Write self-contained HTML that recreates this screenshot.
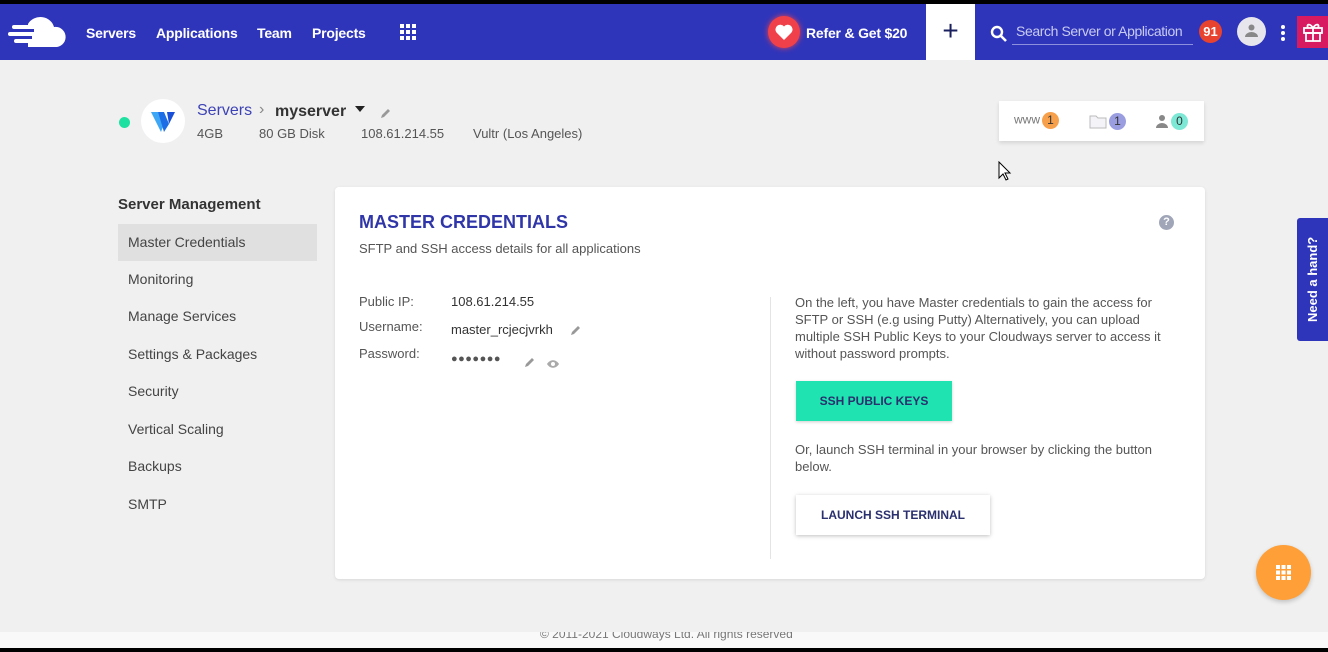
<!DOCTYPE html>
<html><head><meta charset="utf-8"><style>
*{margin:0;padding:0;box-sizing:border-box}
body{width:1328px;height:652px;overflow:hidden;background:#000;font-family:"Liberation Sans",sans-serif;position:relative}
.pg{position:absolute;left:0;top:4px;width:1328px;height:644px;background:#f0f0f0}
.nav{position:absolute;left:0;top:0;width:1328px;height:56px;background:#2f35bb;color:#fff}
.nav .l{position:absolute;top:21px;font-size:14px;font-weight:bold;letter-spacing:-0.2px}
.a{position:absolute}
.side div{position:absolute;left:118px;width:199px;height:37px;line-height:37px;padding-left:10px;font-size:14px;color:#444}
.card{position:absolute;left:335px;top:183px;width:870px;height:392px;background:#fff;border-radius:4px;box-shadow:0 1px 3px rgba(0,0,0,.1)}
.t{font-size:13px;color:#333}
.badge{display:inline-block;width:17px;height:17px;border-radius:50%;text-align:center;font-size:12px;line-height:17px;color:#333;vertical-align:middle}
</style></head><body>
<div class="pg">
<div class="nav">
 <svg class="a" style="left:8px;top:12px" width="60" height="34" viewBox="0 0 60 34"><path d="M20 8a14 13 0 0 1 26 3a10 10 0 0 1 3 20H20z" fill="#fff"/><rect x="4" y="9" width="20" height="4" rx="2" fill="#fff"/><rect x="0" y="16" width="22" height="4" rx="2" fill="#fff"/><rect x="6" y="23" width="16" height="4" rx="2" fill="#fff"/><rect x="16" y="13" width="10" height="3" fill="#2f35bb"/><rect x="14" y="20" width="10" height="3" fill="#2f35bb"/></svg>
 <span class="l" style="left:86px">Servers</span><span class="l" style="left:156px">Applications</span><span class="l" style="left:257px">Team</span><span class="l" style="left:312px">Projects</span>
 <svg class="a" style="left:400px;top:20px" width="16" height="16"><g fill="#fff"><rect x="0" y="0" width="4" height="4"/><rect x="6" y="0" width="4" height="4"/><rect x="12" y="0" width="4" height="4"/><rect x="0" y="6" width="4" height="4"/><rect x="6" y="6" width="4" height="4"/><rect x="12" y="6" width="4" height="4"/><rect x="0" y="12" width="4" height="4"/><rect x="6" y="12" width="4" height="4"/><rect x="12" y="12" width="4" height="4"/></g></svg>
 <div class="a" style="left:768px;top:12px;width:32px;height:32px;border-radius:50%;background:#f0414a;box-shadow:0 0 6px #f0414a"></div>
 <svg class="a" style="left:775px;top:20px" width="18" height="16" viewBox="0 0 18 16"><path d="M9 16L1.5 8.5A4.5 4.5 0 0 1 9 2.5A4.5 4.5 0 0 1 16.5 8.5z" fill="#fff"/></svg>
 <span class="l" style="left:806px">Refer &amp; Get $20</span>
 <div class="a" style="left:926px;top:0;width:49px;height:56px;background:#fff;color:#1a1f5e;font-size:28px;text-align:center;line-height:54px">+</div>
 <svg class="a" style="left:990px;top:21px" width="18" height="18"><circle cx="7" cy="7" r="5" stroke="#fff" stroke-width="2.4" fill="none"/><path d="M11 11l5 5" stroke="#fff" stroke-width="2.6"/></svg>
 <span class="a" style="left:1016px;top:19px;font-size:14px;color:#c8cbf0;letter-spacing:-0.4px">Search Server or Application</span>
 <div class="a" style="left:1012px;top:40px;width:181px;height:1px;background:#8c90dd"></div>
 <div class="a" style="left:1199px;top:16px;width:23px;height:23px;border-radius:50%;background:#e8432f;font-size:13px;font-weight:bold;text-align:center;line-height:23px">91</div>
 <div class="a" style="left:1237px;top:13px;width:29px;height:29px;border-radius:50%;background:#e6e6ec"></div>
 <svg class="a" style="left:1244px;top:19px" width="15" height="15"><circle cx="7.5" cy="4.5" r="3" fill="#888"/><path d="M1 14a6.5 5 0 0 1 13 0z" fill="#888"/></svg>
 <div class="a" style="left:1281px;top:21px;width:4px;height:4px;border-radius:2px;background:#fff;box-shadow:0 6px 0 #fff,0 12px 0 #fff"></div>
 <div class="a" style="left:1297px;top:12px;width:31px;height:32px;background:#d81b60"></div>
 <svg class="a" style="left:1302px;top:17px" width="22" height="22" viewBox="0 0 22 22"><g stroke="#fff" stroke-width="1.8" fill="none"><rect x="2" y="7" width="18" height="5"/><rect x="4" y="12" width="14" height="8"/><path d="M11 7v13M11 7C8 2 4 3 6 7M11 7c3-5 7-4 5 0"/></g></svg>
</div>
<div class="a" style="left:119px;top:113px;width:11px;height:11px;border-radius:50%;background:#1ee0a0"></div>
<div class="a" style="left:141px;top:95px;width:44px;height:44px;border-radius:50%;background:#fff"></div>
<svg class="a" style="left:150px;top:104px" width="28" height="26" viewBox="0 0 28 26"><path d="M1 4h7l6 12-3 8z" fill="#3ea7f5"/><path d="M8 4h6l5 12-5 8z" fill="#1d6ee6"/><path d="M17 4h8l-6 12z" fill="#1a4fd8"/></svg>
<span class="a" style="left:197px;top:98px;font-size:16px;color:#3d42b5">Servers</span>
<span class="a" style="left:259px;top:97px;font-size:16px;color:#888">›</span>
<span class="a" style="left:275px;top:99px;font-size:16px;font-weight:bold;color:#333">myserver</span>
<div class="a" style="left:355px;top:102px;border:5px solid transparent;border-top:6px solid #222"></div>
<svg class="a" style="left:380px;top:103px" width="12" height="12"><path d="M1 11l1-3 6-6 2 2-6 6z" fill="#999"/></svg>
<div class="a t" style="left:197px;top:122px;color:#555">4GB</div>
<div class="a t" style="left:259px;top:122px;color:#555">80 GB Disk</div>
<div class="a t" style="left:361px;top:122px;color:#555">108.61.214.55</div>
<div class="a t" style="left:473px;top:122px;color:#555">Vultr (Los Angeles)</div>
<div class="a" style="left:999px;top:97px;width:205px;height:40px;background:#fff;box-shadow:0 2px 4px rgba(0,0,0,.12)"></div>
<div class="a" style="left:1014px;top:108px;font-size:12px;color:#777">www<span class="badge" style="background:#f7a04b;margin-left:2px">1</span></div>
<svg class="a" style="left:1089px;top:110px" width="18" height="15"><path d="M1 2h6l2 2h8v10H1z" fill="#f4f4f8" stroke="#bbb"/></svg>
<span class="a badge" style="left:1109px;top:109px;background:#9a9ee0">1</span>
<svg class="a" style="left:1155px;top:110px" width="14" height="15"><circle cx="7" cy="4" r="3" fill="#888"/><path d="M1 14a6 5 0 0 1 12 0z" fill="#888"/></svg>
<span class="a badge" style="left:1171px;top:109px;background:#7ee8d6">0</span>
<svg class="a" style="left:998px;top:157px" width="14" height="20"><path d="M1 1v16l4-4 3 6 2-1-3-6h5z" fill="#fff" stroke="#000"/></svg>
<div class="a" style="left:118px;top:192px;font-size:15px;font-weight:bold;color:#333">Server Management</div>
<div class="side">
<div style="top:220px;background:#e0e0e0">Master Credentials</div>
<div style="top:257px">Monitoring</div>
<div style="top:294px">Manage Services</div>
<div style="top:332px">Settings &amp; Packages</div>
<div style="top:369px">Security</div>
<div style="top:407px">Vertical Scaling</div>
<div style="top:444px">Backups</div>
<div style="top:482px">SMTP</div>
</div>
<div class="card">
 <div class="a" style="left:24px;top:25px;font-size:18px;font-weight:bold;color:#3036a8">MASTER CREDENTIALS</div>
 <div class="a t" style="left:24px;top:54px;color:#555">SFTP and SSH access details for all applications</div>
 <div class="a" style="left:824px;top:28px;width:15px;height:15px;border-radius:50%;background:#a0a6b8;color:#fff;font-size:11px;font-weight:bold;text-align:center;line-height:15px">?</div>
 <div class="a t" style="left:24px;top:107px;color:#555">Public IP:</div>
 <div class="a t" style="left:116px;top:107px">108.61.214.55</div>
 <div class="a t" style="left:24px;top:132px;color:#555">Username:</div>
 <div class="a t" style="left:116px;top:135px">master_rcjecjvrkh</div>
 <svg class="a" style="left:235px;top:137px" width="12" height="12"><path d="M1 11l1-3 6-6 2 2-6 6z" fill="#999"/></svg>
 <div class="a t" style="left:24px;top:159px;color:#555">Password:</div>
 <div class="a" style="left:116px;top:166px;font-size:11px;color:#555;letter-spacing:0.5px">●●●●●●●</div>
 <svg class="a" style="left:189px;top:169px" width="12" height="12"><path d="M1 11l1-3 6-6 2 2-6 6z" fill="#999"/></svg>
 <svg class="a" style="left:211px;top:172px" width="14" height="10"><path d="M1 5c3-5 9-5 12 0c-3 5-9 5-12 0z" fill="#aaa"/><circle cx="7" cy="5" r="2" fill="#fff"/></svg>
 <div class="a" style="left:435px;top:110px;width:1px;height:262px;background:#e4e4e4"></div>
 <div class="a t" style="left:460px;top:107px;width:390px;line-height:17px;color:#555">On the left, you have Master credentials to gain the access for SFTP or SSH (e.g using Putty) Alternatively, you can upload multiple SSH Public Keys to your Cloudways server to access it without password prompts.</div>
 <div class="a" style="left:461px;top:194px;width:156px;height:40px;background:#1fe3b0;box-shadow:0 1px 3px rgba(0,0,0,.2);font-size:12px;font-weight:bold;color:#2a2f6e;text-align:center;line-height:40px">SSH PUBLIC KEYS</div>
 <div class="a t" style="left:460px;top:254px;width:390px;line-height:17px;color:#555">Or, launch SSH terminal in your browser by clicking the button below.</div>
 <div class="a" style="left:461px;top:308px;width:194px;height:40px;background:#fff;box-shadow:0 1px 4px rgba(0,0,0,.25);font-size:12px;font-weight:bold;color:#2a2f6e;text-align:center;line-height:40px">LAUNCH SSH TERMINAL</div>
</div>
<div class="a" style="left:1297px;top:214px;width:31px;height:123px;background:#2f35bb;border-radius:3px 0 0 3px"></div>
<div class="a" style="left:1297px;top:214px;width:31px;height:123px;color:#fff;font-size:13px;font-weight:bold;writing-mode:vertical-rl;transform:rotate(180deg);text-align:center;line-height:31px">Need a hand?</div>
<div class="a" style="left:1256px;top:541px;width:55px;height:55px;border-radius:50%;background:#ff9f38;box-shadow:0 2px 5px rgba(0,0,0,.2)"></div>
<svg class="a" style="left:1276px;top:561px" width="15" height="15"><g fill="#fff"><rect x="0" y="0" width="4" height="4"/><rect x="5.5" y="0" width="4" height="4"/><rect x="11" y="0" width="4" height="4"/><rect x="0" y="5.5" width="4" height="4"/><rect x="5.5" y="5.5" width="4" height="4"/><rect x="11" y="5.5" width="4" height="4"/><rect x="0" y="11" width="4" height="4"/><rect x="5.5" y="11" width="4" height="4"/><rect x="11" y="11" width="4" height="4"/></g></svg>
<div class="a" style="left:0;top:628px;width:1328px;height:16px;background:#f9f9f9;overflow:hidden"><span style="position:absolute;left:540px;top:-5px;font-size:12px;color:#777">© 2011-2021 Cloudways Ltd. All rights reserved</span></div>
</div>
</body></html>
